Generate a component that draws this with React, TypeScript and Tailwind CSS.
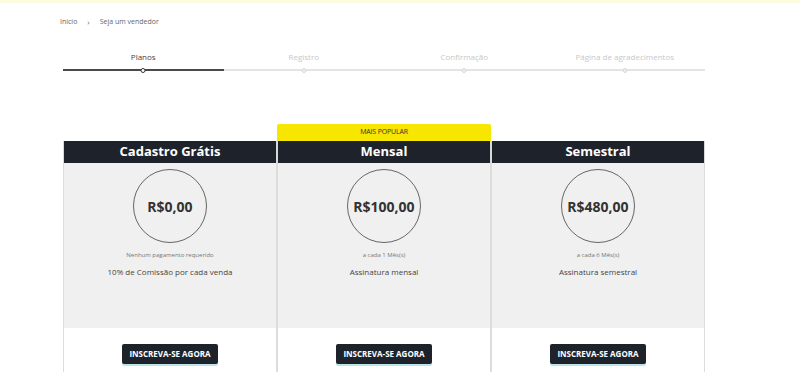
const steps = ["Planos", "Registro", "Confirmação", "Página de agradecimentos"];

const plans = [
    { title: "Cadastro Grátis", price: "R$0,00", note: "Nenhum pagamento requerido", desc: "10% de Comissão por cada venda", popular: false },
    { title: "Mensal", price: "R$100,00", note: "a cada 1 Mês(s)", desc: "Assinatura mensal", popular: true },
    { title: "Semestral", price: "R$480,00", note: "a cada 6 Mês(s)", desc: "Assinatura semestral", popular: false },
];

export default function App() {
    return (
        <div className="w-[800px] h-[372px] overflow-hidden bg-white font-['Open_Sans',sans-serif] text-[#333]">
            <div className="h-[3px] bg-[#fdfbe0]" />

            {/* Breadcrumb */}
            <div className="flex items-center gap-[10px] pl-[60px] pt-[13px] text-[7px] text-[#666]">
                <span>Início</span>
                <span className="text-[8px]">›</span>
                <span>Seja um vendedor</span>
            </div>

            {/* Stepper */}
            <div className="ml-[63px] w-[642px] mt-[23px] grid grid-cols-4">
                {steps.map((s, i) => (
                    <div key={s} className="flex flex-col items-center">
                        <span className={`text-[8px] leading-[12px] ${i === 0 ? "text-[#444]" : "text-[#c8c8c8]"}`}>{s}</span>
                        <div className="relative w-full mt-[4px] h-[6px] flex items-center">
                            <div className={`w-full h-[2px] ${i === 0 ? "bg-[#4a4a4a]" : "bg-[#e4e4e4]"}`} />
                            <div className={`absolute left-1/2 -translate-x-1/2 w-[5px] h-[5px] rounded-full border ${i === 0 ? "border-[#333] bg-white" : "border-[#d8d8d8] bg-[#eee]"}`} />
                        </div>
                    </div>
                ))}
            </div>

            {/* Plans */}
            <div className="ml-[63px] w-[642px] mt-[51px] grid grid-cols-3 items-end">
                {plans.map((p) => (
                    <div key={p.title} className="flex flex-col">
                        {p.popular && (
                            <div className="h-[17px] bg-[#f7e600] rounded-t-[2px] flex items-center justify-center text-[7px] text-[#333] tracking-tight">
                                MAIS POPULAR
                            </div>
                        )}
                        <div className="h-[22px] bg-[#1e232b] border-x border-[#d8d8d8] flex items-center justify-center text-white text-[13px] font-bold">
                            {p.title}
                        </div>
                        <div className="h-[165px] bg-[#f0f0f0] border-x border-[#dcdcdc] flex flex-col items-center">
                            <div className="mt-[6px] w-[74px] h-[74px] rounded-full border border-[#666] flex items-center justify-center text-[14px] font-bold text-[#333]">
                                {p.price}
                            </div>
                            <div className="mt-[8px] text-[6px] text-[#777]">{p.note}</div>
                            <div className="mt-[6px] text-[8px] text-[#444]">{p.desc}</div>
                        </div>
                        <div className="h-[60px] bg-white border-x border-[#dcdcdc] flex justify-center pt-[16px]">
                            <div className="h-[20px] px-[7px] bg-[#1e232b] rounded-[2px] shadow-[0_2px_0_#bfe3ea] flex items-center text-white text-[8px] font-bold">
                                INSCREVA-SE AGORA
                            </div>
                        </div>
                    </div>
                ))}
            </div>
        </div>
    );
}
